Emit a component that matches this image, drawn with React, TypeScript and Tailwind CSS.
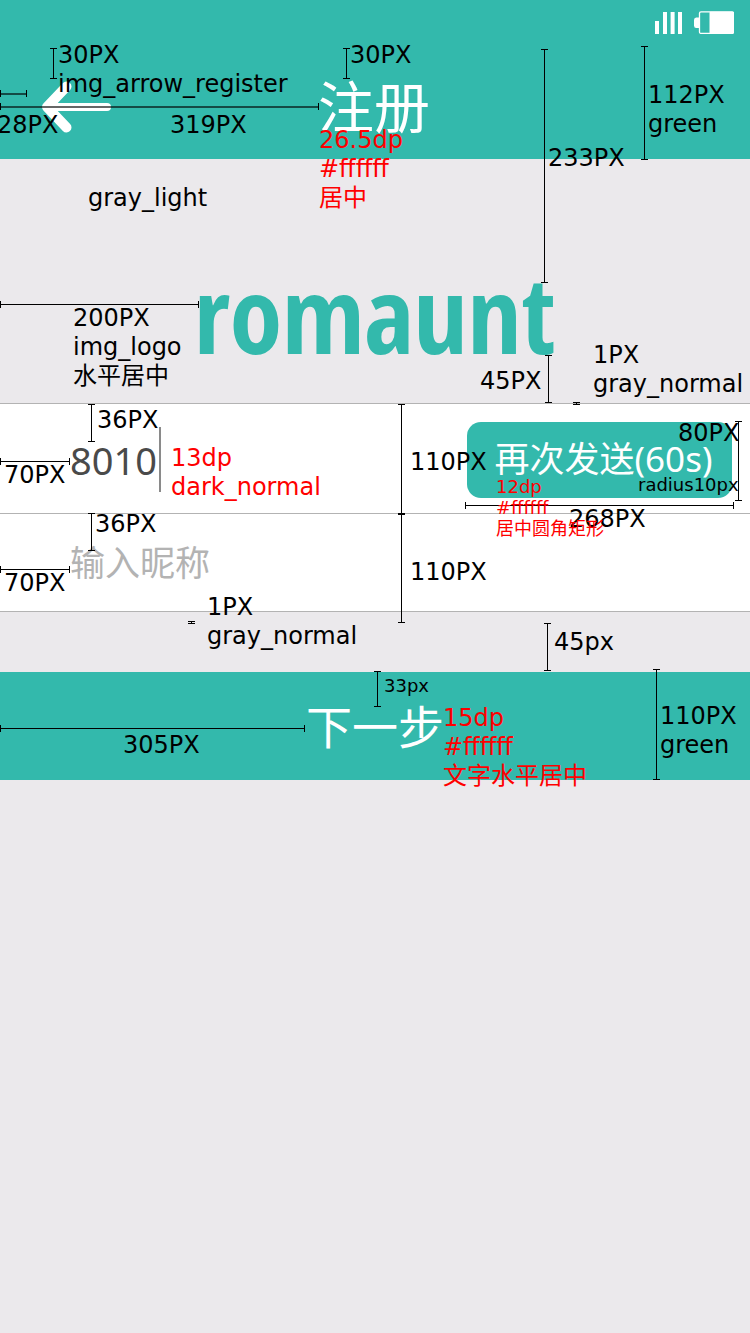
const latin = 'font-["DejaVu_Sans","Noto_Sans_CJK_SC",sans-serif]';

type Note = { at: string; lines: string[]; tone?: string; small?: boolean };

const notes: Note[] = [
  { at: "left-[58px] top-[41px]", lines: ["30PX", "img_arrow_register"] },
  { at: "left-[-3px] top-[111px]", lines: ["28PX"] },
  { at: "left-[170px] top-[111px]", lines: ["319PX"] },
  { at: "left-[350px] top-[41px]", lines: ["30PX"] },
  { at: "left-[319px] top-[126px]", lines: ["26.5dp", "#ffffff", "居中"], tone: "text-[#ff0000]" },
  { at: "left-[88px] top-[184px]", lines: ["gray_light"] },
  { at: "left-[648px] top-[81px]", lines: ["112PX", "green"] },
  { at: "left-[548px] top-[144px]", lines: ["233PX"] },
  { at: "left-[73px] top-[304px]", lines: ["200PX", "img_logo", "水平居中"] },
  { at: "left-[480px] top-[367px]", lines: ["45PX"] },
  { at: "left-[593px] top-[341px]", lines: ["1PX", "gray_normal"] },
  { at: "left-[97px] top-[406px]", lines: ["36PX"] },
  { at: "left-[4px] top-[461px]", lines: ["70PX"] },
  { at: "left-[171px] top-[444px]", lines: ["13dp", "dark_normal"], tone: "text-[#ff0000]" },
  { at: "left-[410px] top-[448px]", lines: ["110PX"] },
  { at: "left-[678px] top-[419px]", lines: ["80PX"] },
  { at: "left-[638px] top-[474px]", lines: ["radius10px"], small: true },
  { at: "left-[569px] top-[505px]", lines: ["268PX"] },
  { at: "left-[496px] top-[476px]", lines: ["12dp", "#ffffff", "居中圆角矩形"], tone: "text-[#ff0000]", small: true },
  { at: "left-[95px] top-[510px]", lines: ["36PX"] },
  { at: "left-[4px] top-[569px]", lines: ["70PX"] },
  { at: "left-[410px] top-[558px]", lines: ["110PX"] },
  { at: "left-[207px] top-[593px]", lines: ["1PX", "gray_normal"] },
  { at: "left-[554px] top-[628px]", lines: ["45px"] },
  { at: "left-[384px] top-[675px]", lines: ["33px"], small: true },
  { at: "left-[443px] top-[704px]", lines: ["15dp", "#ffffff", "文字水平居中"], tone: "text-[#ff0000]" },
  { at: "left-[660px] top-[702px]", lines: ["110PX", "green"] },
  { at: "left-[123px] top-[731px]", lines: ["305PX"] },
];

const verticals = [
  "left-[50px] top-[48px] h-[31px]",
  "left-[343px] top-[48px] h-[31px]",
  "left-[541px] top-[49px] h-[234px]",
  "left-[641px] top-[46px] h-[114px]",
  "left-[545px] top-[355px] h-[48px]",
  "left-[573px] top-[402px] h-[3px]",
  "left-[88px] top-[404px] h-[38px]",
  "left-[398px] top-[404px] h-[110px]",
  "left-[735px] top-[421px] h-[80px]",
  "left-[88px] top-[513px] h-[38px]",
  "left-[398px] top-[514px] h-[109px]",
  "left-[188px] top-[621px] h-[3px]",
  "left-[544px] top-[623px] h-[48px]",
  "left-[374px] top-[671px] h-[36px]",
  "left-[653px] top-[669px] h-[111px]",
];

const horizontals = [
  { at: "left-0 top-[90px] w-[27px]", line: "h-0.5 bg-black/60" },
  { at: "left-0 top-[103px] w-[319px]", line: "h-0.5 bg-black/60" },
  { at: "left-0 top-[301px] w-[199px]", line: "h-px bg-black" },
  { at: "left-0 top-[458px] w-[70px]", line: "h-px bg-black" },
  { at: "left-[465px] top-[502px] w-[269px]", line: "h-px bg-black" },
  { at: "left-0 top-[566px] w-[70px]", line: "h-px bg-black" },
  { at: "left-0 top-[725px] w-[305px]", line: "h-px bg-black" },
];

function Annotations() {
  return (
    <div className={`pointer-events-none absolute inset-0 overflow-hidden ${latin}`}>
      {verticals.map((at) => (
        <div key={at} className={`absolute flex w-[7px] justify-center border-y border-black ${at}`}>
          <div className="w-px bg-black" />
        </div>
      ))}
      {horizontals.map(({ at, line }) => (
        <div key={at} className={`absolute flex h-[7px] items-center border-x border-black ${at}`}>
          <div className={`w-full ${line}`} />
        </div>
      ))}
      {notes.map(({ at, lines, tone = "text-black", small }) => (
        <div
          key={at}
          className={`absolute whitespace-nowrap ${at} ${tone} ${small ? "text-[18px] leading-[21px]" : "text-[24px] leading-[29px]"}`}
        >
          {lines.map((line) => (
            <p key={line} className={small ? "h-[21px]" : "h-[29px]"}>{line}</p>
          ))}
        </div>
      ))}
    </div>
  );
}

function StatusBar() {
  return (
    <div className="flex justify-end gap-3 pt-[11px] pr-4">
      <svg width="27" height="23" viewBox="0 0 27 23" fill="#fff" aria-hidden="true">
        <rect x="0" y="10" width="4" height="13" />
        <rect x="8" y="1" width="4" height="22" />
        <rect x="15.6" y="1" width="4" height="22" />
        <rect x="23" y="1" width="4" height="22" />
      </svg>
      <svg width="40" height="23" viewBox="0 0 40 23" aria-hidden="true">
        <path d="M5 6.5H2.2Q0 6.5 0 9V14.5Q0 17 2.2 17H5Z" fill="#fff" />
        <rect x="5.5" y="0.8" width="34" height="21.6" rx="1.5" fill="none" stroke="#fff" strokeWidth="1.3" />
        <rect x="15.5" y="0.8" width="24" height="21.6" rx="1" fill="#fff" />
      </svg>
    </div>
  );
}

export default function App() {
  return (
    <main className='relative min-h-screen overflow-hidden bg-[#ebe9ec] font-["Noto_Sans","Noto_Sans_CJK_SC",sans-serif]'>
      <header className="h-[159px] bg-[#33b9ac]">
        <StatusBar />
        <div className="mt-[30px] flex h-[84px] items-center pl-[41px]">
          <button type="button" aria-label="返回" className="pt-0.5">
            <svg width="71" height="54" viewBox="0 0 71 54" fill="none" stroke="#fff" strokeLinecap="round" aria-hidden="true">
              <path d="M25.5 6.5 6 27 25.5 47.5" strokeWidth="10" strokeLinejoin="round" />
              <path d="M8 27H66" strokeWidth="8" />
            </svg>
          </button>
          <h1 className="ml-[206px] text-[56px] leading-[64px] whitespace-nowrap text-white">注册</h1>
        </div>
      </header>

      <div className="flex h-[244px] items-end pb-10 pl-[194px]">
        <p className='font-["Open_Sans_Condensed","Open_Sans",sans-serif] text-[106px] leading-[100px] font-extrabold text-[#33b9ac]'>
          romaunt
        </p>
      </div>

      <form>
        <div className="flex h-[110px] items-center border-t border-[#b3b3b3] bg-white pt-0.5 pr-[18px] pl-[70px]">
          <input
            aria-label="验证码"
            defaultValue="8010"
            className="h-[60px] w-[89px] bg-transparent text-[38px] text-[#4a4a4a] outline-none"
          />
          <div className="h-[65px] w-0.5 bg-[#8a8a8a]" />
          <button type="button" className="ml-auto h-[76px] w-[265px] rounded-[14px] bg-[#33b9ac] pl-2 text-[35px] whitespace-nowrap text-white">
            再次发送(60s)
          </button>
        </div>
        <div className="flex h-[99px] items-center border-y border-[#b3b3b3] bg-white px-[70px]">
          <input
            aria-label="昵称"
            placeholder="输入昵称"
            className="h-[60px] w-full bg-transparent text-[35px] text-[#4a4a4a] outline-none placeholder:text-[#b3b3b3]"
          />
        </div>
        <button type="submit" className="mt-[60px] h-[108px] w-full bg-[#33b9ac] text-[46px] text-white">
          下一步
        </button>
      </form>

      <Annotations />
    </main>
  );
}
